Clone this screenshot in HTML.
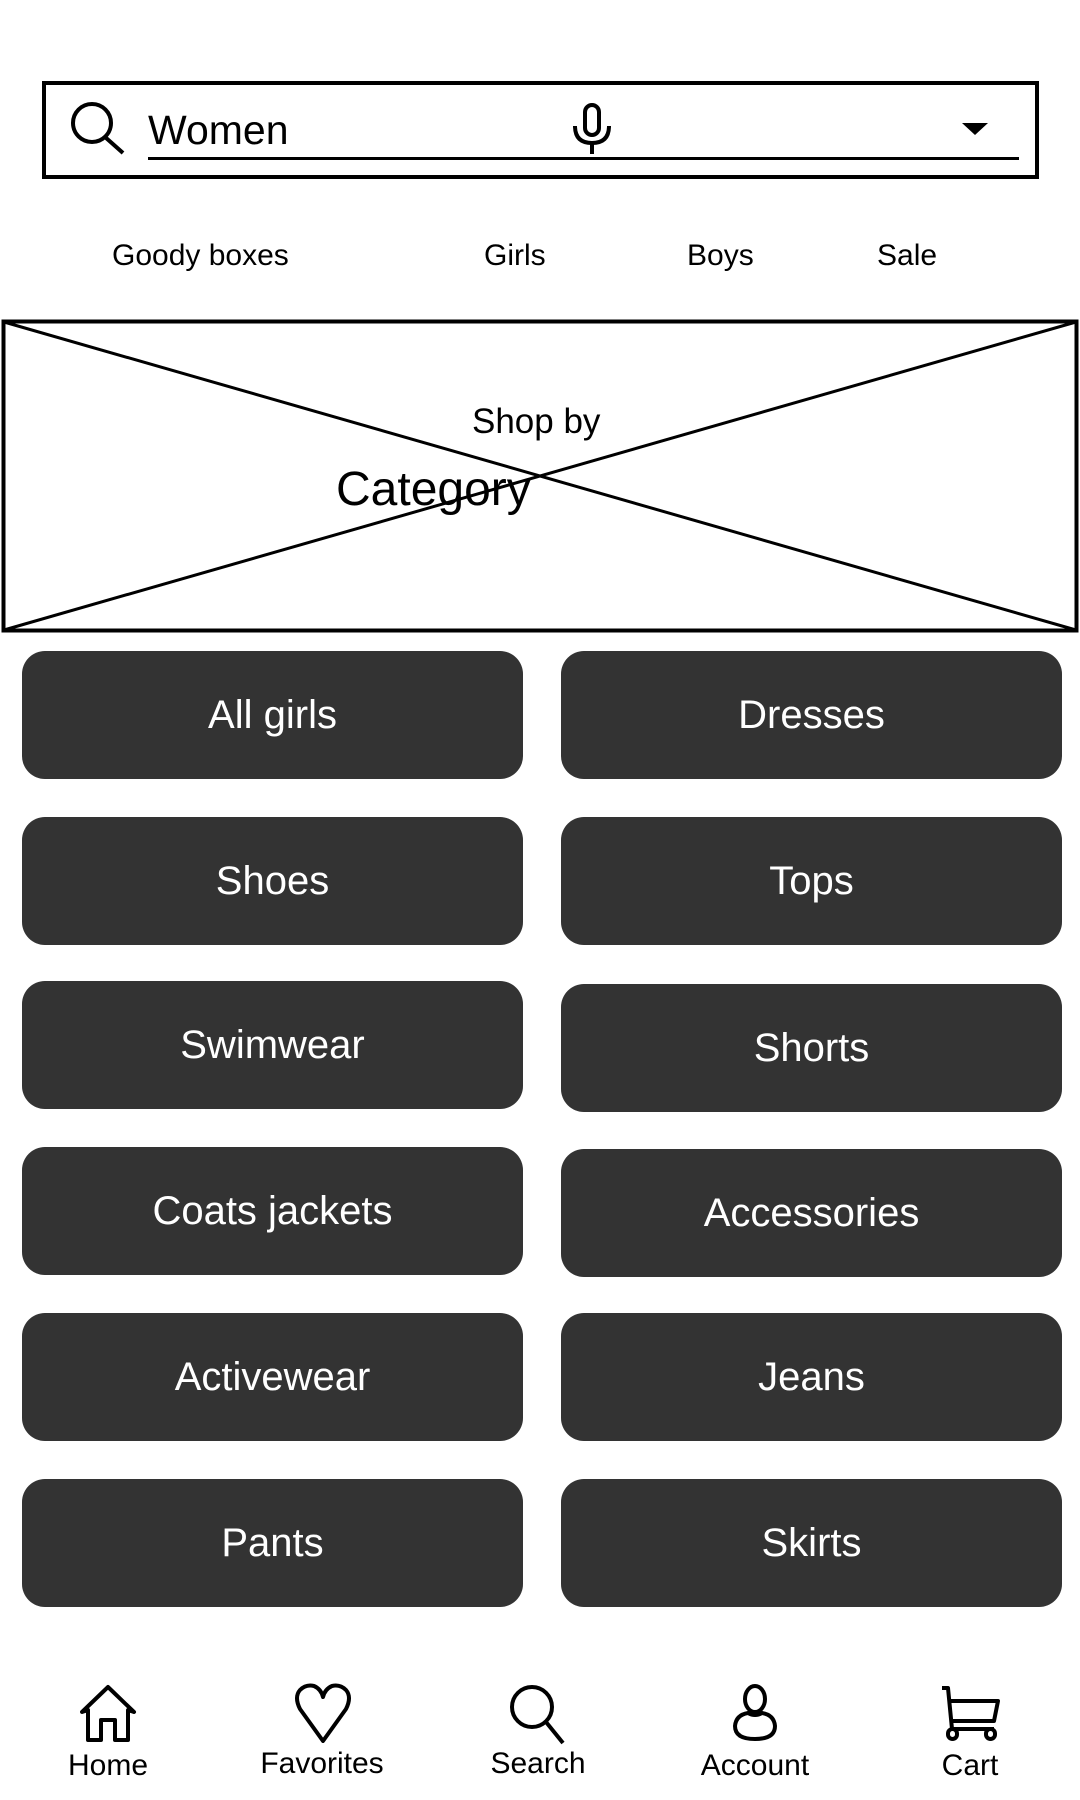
<!DOCTYPE html>
<html><head><meta charset="utf-8"><style>
*{margin:0;padding:0;box-sizing:border-box}
body{width:1080px;height:1800px;background:#fff;position:relative;overflow:hidden;font-family:"Liberation Sans",Arial,sans-serif;color:#000}
.abs{position:absolute}
.nav{position:absolute;top:239px;font-size:30px;line-height:34px}
.btn{position:absolute;width:501px;height:128px;background:#333;border-radius:23px;color:#fff;font-size:40px;display:flex;align-items:center;justify-content:center}
.lbl{position:absolute;top:1746px;font-size:30px;width:200px;text-align:center;line-height:36px}
</style></head><body>
<div class="abs" style="left:42px;top:81px;width:997px;height:98px;border:4.5px solid #000"></div>
<svg class="abs" style="left:68px;top:100px" width="60" height="56" viewBox="0 0 60 56"><circle cx="24" cy="23" r="19" fill="none" stroke="#000" stroke-width="4"/><line x1="37" y1="37" x2="55" y2="53" stroke="#000" stroke-width="4"/></svg>
<div class="abs" style="left:148px;top:105px;font-size:41px;line-height:50px">Women</div>
<div class="abs" style="left:148px;top:157px;width:871px;height:3px;background:#000"></div>
<svg class="abs" style="left:570px;top:102px" width="44" height="52" viewBox="0 0 44 52"><rect x="15" y="3" width="14" height="30" rx="7" fill="none" stroke="#000" stroke-width="4"/><path d="M5 24 Q5 41 22 41 Q39 41 39 24" fill="none" stroke="#000" stroke-width="4"/><line x1="22" y1="41" x2="22" y2="52" stroke="#000" stroke-width="4"/></svg>
<svg class="abs" style="left:962px;top:123px" width="26" height="12"><path d="M0 0 L26 0 L13 12 Z" fill="#000"/></svg>
<div class="nav" style="left:112px">Goody boxes</div>
<div class="nav" style="left:484px">Girls</div>
<div class="nav" style="left:687px">Boys</div>
<div class="nav" style="left:877px">Sale</div>
<svg class="abs" style="left:0;top:318px" width="1080" height="316"><rect x="3.5" y="3.5" width="1073" height="309" fill="none" stroke="#000" stroke-width="4"/><line x1="4" y1="4" x2="1076" y2="312" stroke="#000" stroke-width="3"/><line x1="4" y1="312" x2="1076" y2="4" stroke="#000" stroke-width="3"/></svg>
<div class="abs" style="left:472px;top:402px;font-size:35px;line-height:40px">Shop by</div>
<div class="abs" style="left:336px;top:462px;font-size:48px;line-height:56px">Category</div>
<div class="btn" style="left:22px;top:651px">All girls</div>
<div class="btn" style="left:561px;top:651px">Dresses</div>
<div class="btn" style="left:22px;top:817px">Shoes</div>
<div class="btn" style="left:561px;top:817px">Tops</div>
<div class="btn" style="left:22px;top:981px">Swimwear</div>
<div class="btn" style="left:561px;top:984px">Shorts</div>
<div class="btn" style="left:22px;top:1147px">Coats jackets</div>
<div class="btn" style="left:561px;top:1149px">Accessories</div>
<div class="btn" style="left:22px;top:1313px">Activewear</div>
<div class="btn" style="left:561px;top:1313px">Jeans</div>
<div class="btn" style="left:22px;top:1479px">Pants</div>
<div class="btn" style="left:561px;top:1479px">Skirts</div>
<svg class="abs" style="left:78px;top:1684px" width="60" height="58" viewBox="0 0 60 58"><path d="M10 56 V26 L4 28 L30 3 L56 28 L50 26 V56 H37 V36 H23 V56 Z" fill="none" stroke="#000" stroke-width="4" stroke-linejoin="round"/></svg>
<svg class="abs" style="left:292px;top:1683px" width="62" height="60" viewBox="0 0 62 60"><path d="M31 58 L8 26 Q2 14 8 7 Q14 1 22 3 Q29 6 31 14 Q33 6 40 3 Q48 1 54 7 Q60 14 54 26 Z" fill="none" stroke="#000" stroke-width="4" stroke-linejoin="round"/></svg>
<svg class="abs" style="left:508px;top:1683px" width="62" height="62" viewBox="0 0 62 62"><circle cx="24" cy="24" r="20" fill="none" stroke="#000" stroke-width="4"/><line x1="38" y1="39" x2="55" y2="60" stroke="#000" stroke-width="4"/></svg>
<svg class="abs" style="left:726px;top:1684px" width="58" height="58" viewBox="0 0 58 58"><ellipse cx="29" cy="15" rx="10" ry="13" fill="none" stroke="#000" stroke-width="4"/><path d="M22 29 Q10 31 9 42 Q9 55 29 55 Q49 55 49 42 Q48 31 36 29 Q29 33 22 29 Z" fill="none" stroke="#000" stroke-width="4"/></svg>
<svg class="abs" style="left:938px;top:1684px" width="66" height="58" viewBox="0 0 66 58"><path d="M4 4 H10 L14 45 M12 17 H60 L56 37 H13" fill="none" stroke="#000" stroke-width="4" stroke-linejoin="round"/><path d="M14 45 H56" stroke="#000" stroke-width="4"/><rect x="10" y="45" width="9" height="10" rx="4.5" fill="none" stroke="#000" stroke-width="4"/><rect x="48" y="45" width="9" height="10" rx="4.5" fill="none" stroke="#000" stroke-width="4"/></svg>
<div class="lbl" style="left:8px;top:1748px">Home</div>
<div class="lbl" style="left:222px">Favorites</div>
<div class="lbl" style="left:438px">Search</div>
<div class="lbl" style="left:655px;top:1748px">Account</div>
<div class="lbl" style="left:870px;top:1748px">Cart</div>
</body></html>
